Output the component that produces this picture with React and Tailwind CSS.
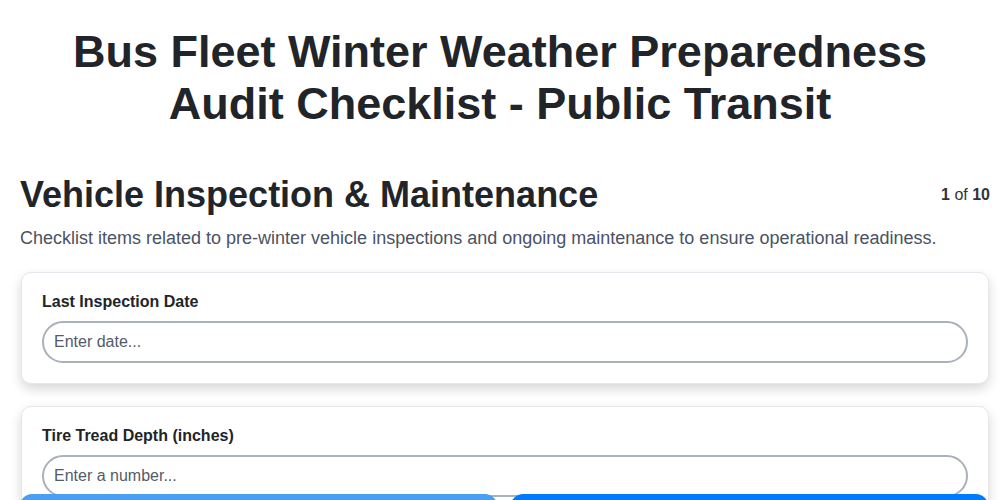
export default function App() {
  const font = { fontFamily: '"Liberation Sans", Arial, sans-serif' };
  return (
    <div className="min-h-[500px] bg-white text-[#212529]" style={font}>
      <h1 className="pt-[26px] px-[20px] text-center text-[45px] leading-[52px] font-bold">
        Bus Fleet Winter Weather Preparedness
        <br />
        Audit Checklist - Public Transit
      </h1>
      <div className="pl-[20px] pr-[10px] pt-[38px]">
        <div className="flex items-center justify-between">
          <h2 className="text-[36px] font-bold leading-normal">Vehicle Inspection &amp; Maintenance</h2>
          <div className="text-[16px] text-[#333]">
            <span className="font-bold">1</span> of <span className="font-bold">10</span>
          </div>
        </div>
        <p className="mt-[3px] text-[18px] leading-normal text-[#4a5263]">
          Checklist items related to pre-winter vehicle inspections and ongoing maintenance to ensure operational readiness.
        </p>
        <div className="mt-[20px] ml-[1px] flex flex-col gap-[22px] pr-[1px]">
          <div className="rounded-[10px] border border-[#e6e7ec] bg-white px-[20px] pt-[17px] pb-[20px] shadow-[0_5px_12px_rgba(0,0,0,0.16)]">
            <label className="block text-[16px] font-bold leading-normal text-[#212529]">Last Inspection Date</label>
            <input
              type="text"
              placeholder="Enter date..."
              className="mt-[7px] block h-[42px] w-full rounded-full border-2 border-[#a9b1ba] px-[10px] text-[16px] text-[#212529] placeholder:text-[#545b68] outline-none"
              style={font}
            />
          </div>
          <div className="rounded-[10px] border border-[#e6e7ec] bg-white px-[20px] pt-[17px] pb-[20px] shadow-[0_5px_12px_rgba(0,0,0,0.16)]">
            <label className="block text-[16px] font-bold leading-normal text-[#212529]">Tire Tread Depth (inches)</label>
            <input
              type="text"
              placeholder="Enter a number..."
              className="mt-[7px] block h-[42px] w-full rounded-full border-2 border-[#a9b1ba] px-[10px] text-[16px] text-[#212529] placeholder:text-[#545b68] outline-none"
              style={font}
            />
          </div>
        </div>
      </div>
      <div className="fixed left-0 right-0 top-[494px] flex gap-[14px] pl-[20px] pr-[12px]">
        <button className="h-[48px] flex-1 rounded-[12px] bg-[#4a9ff5] pt-[20px] text-white">Previous</button>
        <button className="h-[48px] flex-1 rounded-[12px] bg-[#007bff] pt-[20px] text-white">Next</button>
      </div>
    </div>
  );
}
